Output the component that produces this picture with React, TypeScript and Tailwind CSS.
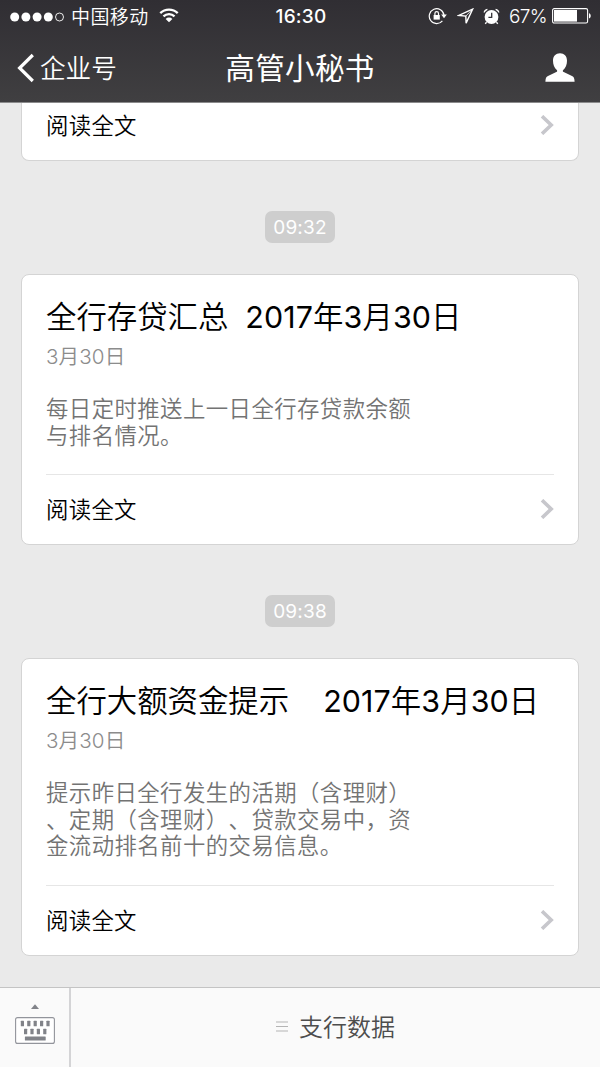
import type { ReactNode } from "react";

function Num({ children, className = "" }: { children: ReactNode; className?: string }) {
  return <span className={`font-['Inter','Noto_Sans_CJK_SC',sans-serif] ${className}`}>{children}</span>;
}

function StatusBar() {
  return (
    <div className="grid h-[33px] grid-cols-3 items-center text-white">
      <div className="flex items-center pl-[10px]">
        <svg width="55" height="10" viewBox="0 0 55 10" fill="#fff">
          <circle cx="4.7" cy="5" r="4.5" />
          <circle cx="15.9" cy="5" r="4.5" />
          <circle cx="27.1" cy="5" r="4.5" />
          <circle cx="38.3" cy="5" r="4.5" />
          <circle cx="49.5" cy="5" r="4" fill="none" stroke="#fff" strokeWidth="0.9" />
        </svg>
        <span className="ml-[6px] whitespace-nowrap pb-[2px] text-[19px] leading-[31px] tracking-[0.4px] font-[350]">中国移动</span>
        <svg className="mb-[2px] ml-[10px]" width="20" height="15" viewBox="0 0 21 16" fill="none" stroke="#fff" strokeWidth="2.5">
          <path d="M1.2 5.5a13.2 13.2 0 0 1 18.6 0" />
          <path d="M4.6 9a8.4 8.4 0 0 1 11.8 0" />
          <path d="M10.5 15.3 6.9 11.6a5.2 5.2 0 0 1 7.2 0z" fill="#fff" stroke="none" />
        </svg>
      </div>
      <Num className="pt-[2px] pl-[2px] text-center text-[19px] font-medium tracking-[0.2px]">16:30</Num>
      <div className="flex items-center justify-end pr-[8px]">
        <svg className="mb-[1px]" width="20" height="18" viewBox="0 0 20 18" fill="none" stroke="#fff" strokeWidth="1.2">
          <path d="M14.4 13.8A7.4 7.4 0 1 1 16 8.2" />
          <path d="M13.2 7.6h5.6L16 11.2z" fill="#fff" stroke="none" />
          <path d="M5.6 8h6.2v4.6H5.6z" fill="#fff" stroke="none" />
          <path d="M6.9 8.2V6.4a1.8 1.8 0 0 1 3.6 0v1.8" />
        </svg>
        <svg className="mb-[1px] ml-[9px]" width="17" height="17" viewBox="0 0 17 17" fill="none" stroke="#fff" strokeWidth="1.4" strokeLinejoin="miter">
          <path d="M15.6 1.2 1.8 7.4l7 .7.3 7z" />
          <path d="m15.6 1.2-6.8 6.9" strokeWidth="0.8" />
        </svg>
        <svg className="mb-[1px] ml-[9px]" width="17" height="17" viewBox="0 0 17 17">
          <circle cx="8.5" cy="9" r="6.9" fill="#fff" />
          <path d="M8.7 4.8v4.5H5.4" fill="none" stroke="#343237" strokeWidth="1.3" />
          <path d="M1.2 4.5A4 4 0 0 1 4.4 1.3M15.8 4.5a4 4 0 0 0-3.2-3.2M3.6 14.2l-1.4 1.6M13.4 14.2l1.4 1.6" fill="none" stroke="#fff" strokeWidth="1.3" />
        </svg>
        <Num className="ml-[9px] pt-[2px] text-[19px] font-light tracking-[-0.6px]">67%</Num>
        <svg className="mb-[1px] ml-[5px]" width="40" height="16" viewBox="0 0 40 16">
          <rect x="0.6" y="0.6" width="35" height="14.4" rx="1.6" fill="none" stroke="#fff" strokeWidth="1.1" />
          <rect x="2" y="2" width="23" height="11.6" fill="#fff" />
          <path d="M37 5.2c2.3.6 2.3 4.6 0 5.2z" fill="#fff" />
        </svg>
      </div>
    </div>
  );
}

function Header() {
  return (
    <header className="h-[103px] shrink-0 border-b border-[#8b8b8c] bg-linear-to-b from-[#302e33] to-[#403f41] text-white">
      <StatusBar />
      <div className="grid h-[69px] grid-cols-3 items-center">
        <div className="flex items-center pl-[17px]">
          <svg width="18" height="30" viewBox="0 0 18 30" fill="none" stroke="#fff" strokeWidth="3.2">
            <path d="M15.8 2 2.6 15l13.2 13" />
          </svg>
          <span className="ml-[5px] pb-[1px] text-[25.6px] leading-[38px] font-[350]">企业号</span>
        </div>
        <h1 className="whitespace-nowrap pb-[2px] text-center text-[29.6px] leading-[38px] tracking-[0.3px] font-normal">高管小秘书</h1>
        <div className="flex justify-end pr-[25px]">
          <svg width="30" height="29" viewBox="0 0 30 29" fill="#fff">
            <path d="M15 .3c4.2 0 7 2.9 7 7.4 0 3.7-1.3 7.1-3.8 9.2-.6.6-.5 1.7.5 2.2l8.3 3.900c1.8.9 2.5 2.2 2.6 5.7H.4c.1-3.5.8-4.8 2.6-5.7l8.3-3.9c1-.5 1.100-1.600.5-2.200C9.300 14.800 8 11.400 8 7.700 8 3.200 10.800.3 15 .3z" />
          </svg>
        </div>
      </div>
    </header>
  );
}

function ReadMore() {
  return (
    <div className="flex h-[69px] items-center justify-between">
      <span className="pb-[3px] text-[22.4px] leading-[30px] tracking-[0.3px] font-[350] text-black">阅读全文</span>
      <svg className="mb-[2px]" width="14" height="20" viewBox="0 0 14 20" fill="none" stroke="#c7c7cc" strokeWidth="3.6">
        <path d="m2 1.2 9.2 8.8L2 18.8" />
      </svg>
    </div>
  );
}

function TimePill({ time }: { time: string }) {
  return (
    <Num className="mx-auto flex h-[32px] w-[70px] shrink-0 items-center justify-center rounded-[7px] bg-[#cecece] pt-[2px] text-[19px] tracking-[0.2px] text-white">
      {time}
    </Num>
  );
}

function Card({ name, gap, lines, className }: { name: string; gap: string; lines: string[]; className: string }) {
  return (
    <article className={`mx-[21px] flex shrink-0 flex-col rounded-[8px] border border-[#d4d4d4] bg-white px-[24px] pt-[20px] ${className}`}>
      <h2 className="flex h-[40px] items-baseline whitespace-nowrap text-[30.4px] leading-[40px] font-[350] text-black">
        <span>{name}</span>
        <Num className={`text-[30.4px] tracking-[0.1px] ${gap}`}>
          <span className="font-normal">2017</span>年<span className="font-normal">3</span>月<span className="font-normal">30</span>日
        </Num>
      </h2>
      <Num className="mt-[7px] h-[30px] text-[20.6px] leading-[30px] tracking-[0.1px] font-[350] text-[#8c8c8c]">3月30日</Num>
      <div className="mt-[22px] grow text-[22.4px] leading-[26.6px] tracking-[0.43px] font-[350] text-[#737373] [text-spacing-trim:space-all]">
        {lines.map((line) => (
          <p key={line} className="whitespace-nowrap">{line}</p>
        ))}
      </div>
      <div className="border-t border-[#e6e6e6]">
        <ReadMore />
      </div>
    </article>
  );
}

function Keyboard() {
  return (
    <svg width="40" height="42" viewBox="0 0 40 42">
      <path d="M20 1.2 24 6h-8z" fill="#818389" />
      <rect x="0.6" y="14.6" width="38.8" height="25.8" rx="2" fill="#fff" stroke="#92949b" strokeWidth="1.1" />
      <g fill="#818389">
        {[5.8, 12.2, 18.6, 25, 31.4].map((x) => (
          <rect key={x} x={x} y="17.8" width="3.2" height="5.4" rx="0.5" />
        ))}
        {[9, 15.4, 21.8, 28.2].map((x) => (
          <rect key={x} x={x} y="25.8" width="3.2" height="5.4" rx="0.5" />
        ))}
        <rect x="9.9" y="33.6" width="20.8" height="4" rx="0.5" />
      </g>
    </svg>
  );
}

export default function App() {
  return (
    <div className="flex h-[1067px] w-[600px] flex-col overflow-hidden bg-[#eaeaea] font-['Noto_Sans_CJK_SC',sans-serif]">
      <Header />
      <main className="flex h-[884px] flex-col">
        <div className="mx-[21px] h-[58px] shrink-0 rounded-b-[8px] border border-t-0 border-[#d4d4d4] bg-white px-[24px]">
          <div className="-mt-[12px]">
            <ReadMore />
          </div>
        </div>
        <div className="mt-[50px] mb-[31px] flex">
          <TimePill time="09:32" />
        </div>
        <Card name="全行存贷汇总" gap="ml-[17px]" className="h-[271px]" lines={["每日定时推送上一日全行存贷款余额", "与排名情况。"]} />
        <div className="mt-[50px] mb-[31px] flex">
          <TimePill time="09:38" />
        </div>
        <Card
          name="全行大额资金提示"
          gap="ml-[34px]"
          className="h-[298px]"
          lines={["提示昨日全行发生的活期（含理财）", "、定期（含理财）、贷款交易中，资", "金流动排名前十的交易信息。"]}
        />
      </main>
      <footer className="flex h-[80px] shrink-0 border-t border-[#c4c4c4] bg-[#fafafa]">
        <button className="flex w-[71px] justify-center border-r-2 border-[#d4d4d6] pt-[15px]">
          <Keyboard />
        </button>
        <button className="flex grow items-center justify-center pb-[2px] text-[#4d4d4d]">
          <svg width="12" height="11" viewBox="0 0 12 11" stroke="#b4b4b4" strokeWidth="1.2">
            <path d="M0 1h12M0 5.5h12M0 10h12" />
          </svg>
          <span className="ml-[11px] pb-[2px] text-[24px] leading-[34px] font-[350]">支行数据</span>
        </button>
      </footer>
    </div>
  );
}
